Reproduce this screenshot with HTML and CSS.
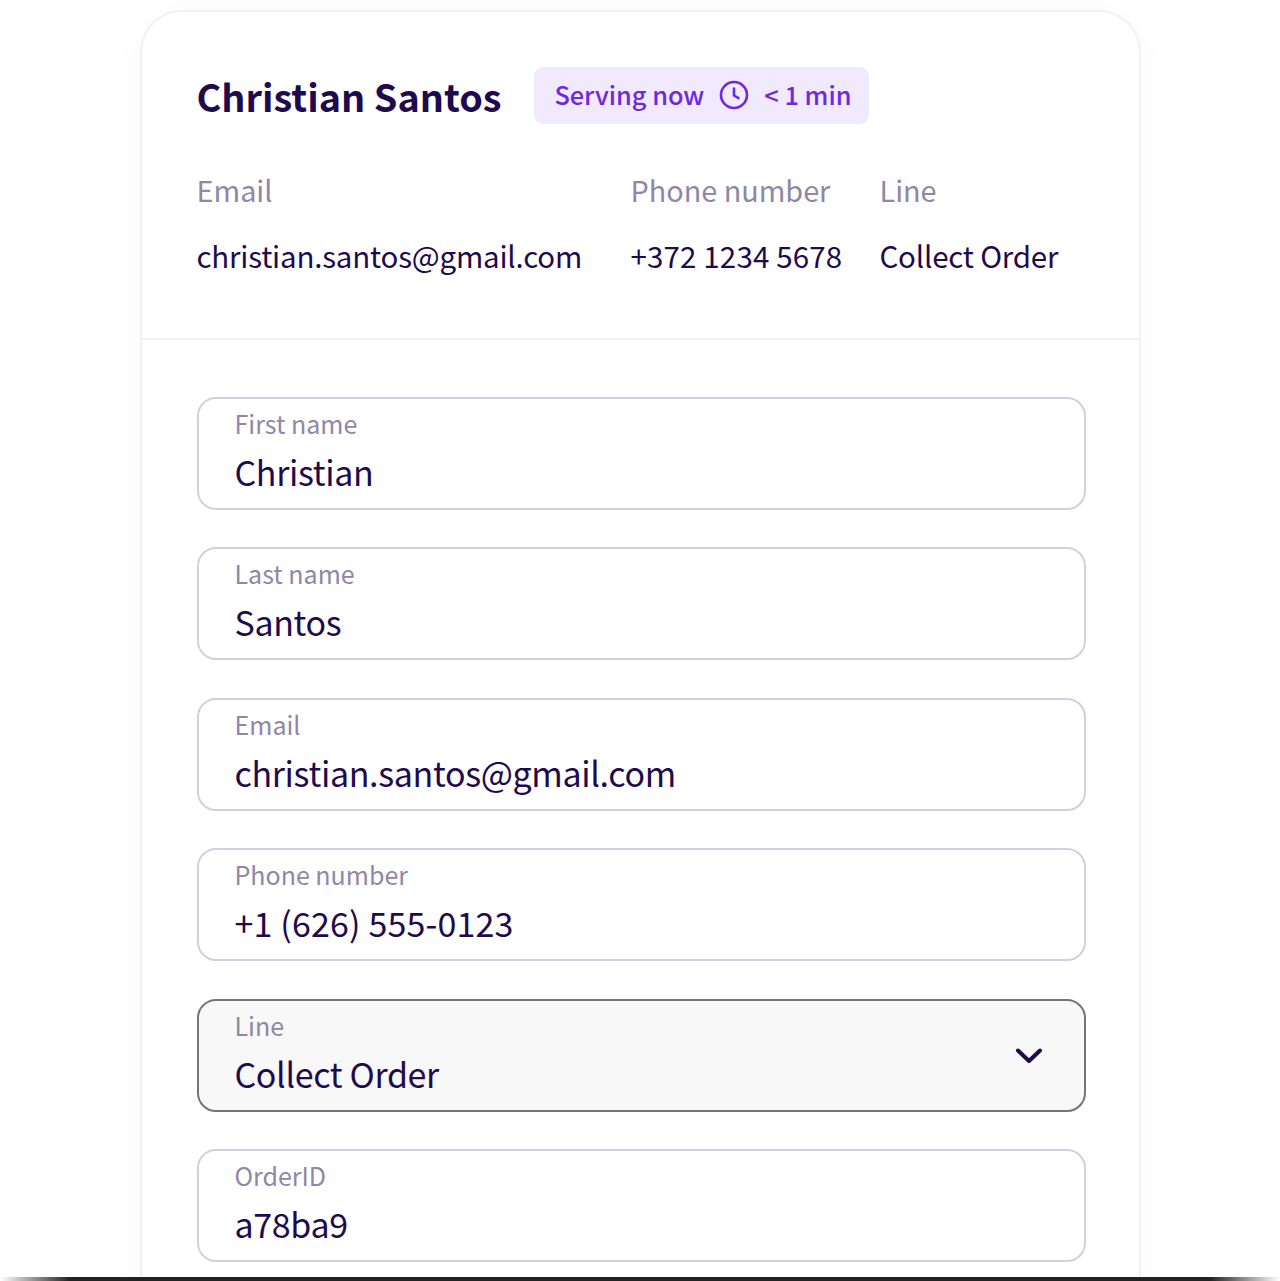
FILE: index.html
```html
<!DOCTYPE html>
<html lang="en">
<head>
  <meta charset="UTF-8">
  <title>Christian Santos</title>
  <link rel="stylesheet" href="styles.css">
</head>
<body>
  <div class="card">
    <div class="summary">
      <div class="summary-head">
        <h1>Christian Santos</h1>
        <div class="status">
          <span>Serving now</span>
          <svg class="clock" viewBox="0 0 30 30" width="30" height="30" fill="none" stroke="currentColor" stroke-width="2.6" stroke-linecap="round" stroke-linejoin="round">
            <circle cx="15" cy="15" r="13"/>
            <path d="M15 8.5V15.5L19.5 18.2"/>
          </svg>
          <span>&lt; 1 min</span>
        </div>
      </div>
      <div class="details">
        <div class="detail detail-email">
          <div class="detail-label">Email</div>
          <div class="detail-value">christian.santos@gmail.com</div>
        </div>
        <div class="detail detail-phone">
          <div class="detail-label">Phone number</div>
          <div class="detail-value number">+372 1234 5678</div>
        </div>
        <div class="detail">
          <div class="detail-label">Line</div>
          <div class="detail-value">Collect Order</div>
        </div>
      </div>
    </div>

    <form class="fields">
      <div class="field">
        <div class="field-label">First name</div>
        <div class="field-value">Christian</div>
      </div>
      <div class="field">
        <div class="field-label">Last name</div>
        <div class="field-value">Santos</div>
      </div>
      <div class="field">
        <div class="field-label">Email</div>
        <div class="field-value">christian.santos@gmail.com</div>
      </div>
      <div class="field">
        <div class="field-label">Phone number</div>
        <div class="field-value number">+1 (626) 555-0123</div>
      </div>
      <div class="field field-select">
        <div>
          <div class="field-label">Line</div>
          <div class="field-value">Collect Order</div>
        </div>
        <svg class="chevron" viewBox="0 0 28 18" width="28" height="18" fill="none" stroke="#1f0a4d" stroke-width="4" stroke-linecap="round" stroke-linejoin="round">
          <path d="M3 3.5L14 14L25 3.5"/>
        </svg>
      </div>
      <div class="field">
        <div class="field-label">OrderID</div>
        <div class="field-value">a78ba9</div>
      </div>
    </form>
  </div>
  <div class="bottom-edge"></div>
</body>
</html>
```

FILE: styles.css
```css
html, body {
  margin: 0;
  height: 1281px;
  overflow: hidden;
  background: #fff;
}
* {
  box-sizing: border-box;
}
body {
  font-family: "Noto Sans CJK JP", "Noto Sans", sans-serif;
  color: #1f0a4d;
  padding: 10px 139px 0 140px;
}

/* Card */
.card {
  background: #fff;
  border: 2.5px solid #f0f2f2;
  border-bottom: 0;
  border-radius: 42px 42px 0 0;
  box-shadow: 0 0 40px rgba(40, 30, 70, 0.025);
  height: 1300px;
}

/* Top summary */
.summary {
  padding: 54.5px 54.5px 0;
  height: 328px;
  border-bottom: 2.5px solid #f0f2f2;
}
.summary-head {
  display: flex;
  align-items: center;
  gap: 33px;
}
h1 {
  margin: 0;
  font-size: 37.8px;
  line-height: 57px;
  font-weight: 700;
}
.status {
  display: flex;
  align-items: center;
  width: 335px;
  height: 57px;
  padding: 0 0 3px 20px;
  gap: 15px;
  background: #f1e9fe;
  border-radius: 9px;
  color: #6d28e0;
  font-size: 25.3px;
  font-weight: 500;
  white-space: nowrap;
}
.clock {
  margin-top: 3px;
}
.details {
  display: flex;
  margin-top: 43px;
}
.detail-email {
  width: 434px;
}
.detail-phone {
  width: 249px;
}
.detail-label {
  font-size: 28.8px;
  line-height: 46px;
  color: #8f86a8;
}
.detail-value {
  margin-top: 20px;
  font-size: 29.5px;
  line-height: 45px;
  letter-spacing: -0.2px;
}
.detail-value.number {
  letter-spacing: 0.15px;
}

/* Form */
.fields {
  display: flex;
  flex-direction: column;
  gap: 37.4px;
  padding: 57px 53px 0 54.5px;
}
.field {
  height: 113px;
  padding: 6px 36px 0;
  border: 2.5px solid #d3cfe0;
  border-radius: 19px;
}
.field-label {
  font-size: 25px;
  line-height: 36px;
  color: #8f86a8;
}
.field-value {
  margin-top: 5px;
  font-size: 34px;
  line-height: 52px;
  letter-spacing: -0.35px;
}
.field-value.number {
  letter-spacing: 0.15px;
}
.field-select {
  display: flex;
  align-items: flex-start;
  justify-content: space-between;
  background: #f8f8f8;
  border-color: #757575;
  padding-right: 41px;
}
.chevron {
  margin-top: 40px;
}

/* Dark strip along the bottom of the shot */
.bottom-edge {
  position: fixed;
  left: 0;
  right: 0;
  bottom: 0;
  height: 4px;
  background: linear-gradient(90deg, #fff 0, #222 70px, #222 1210px, #fff 100%);
}
```
